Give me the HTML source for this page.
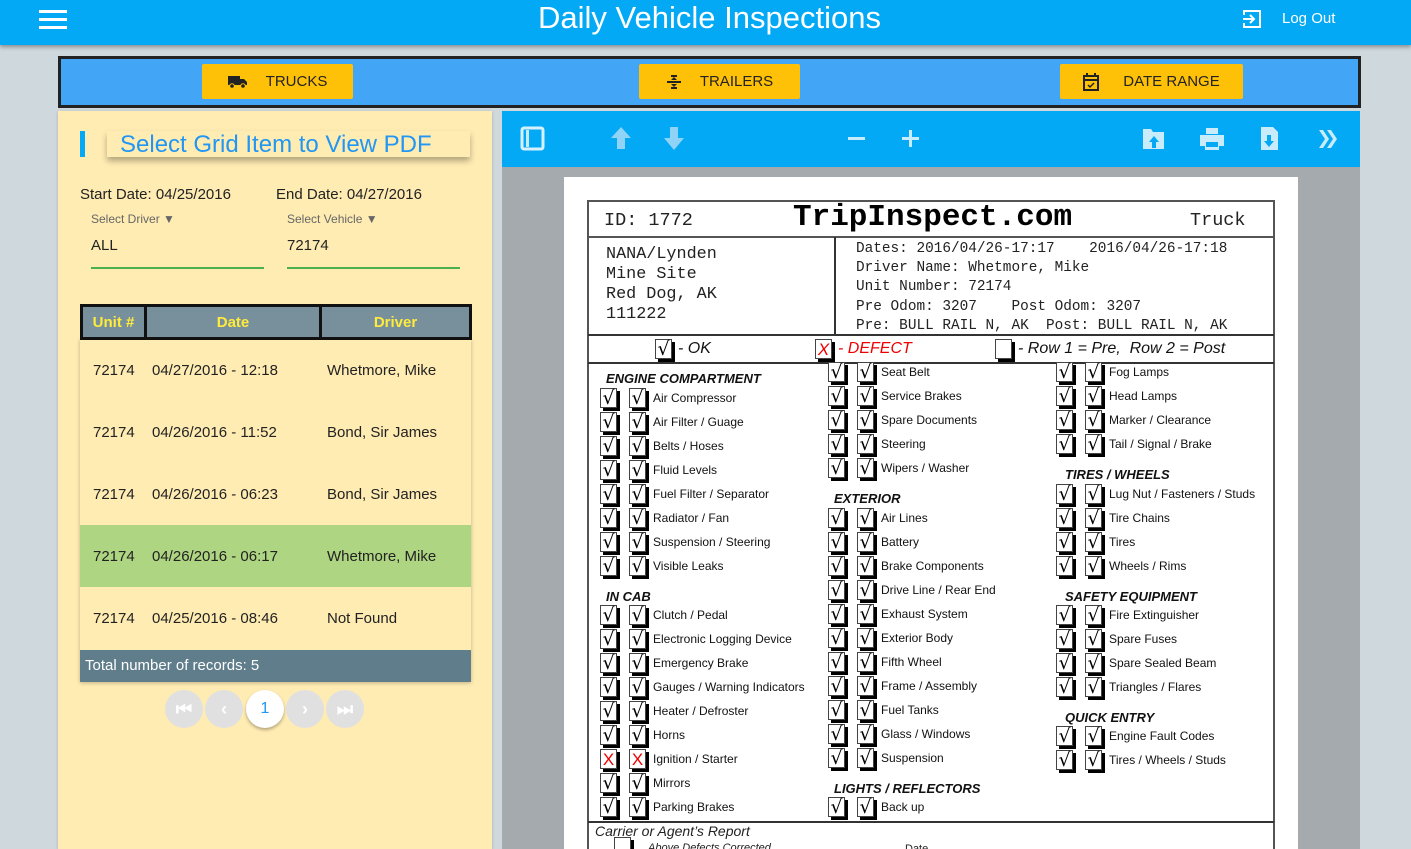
<!DOCTYPE html>
<html><head><meta charset="utf-8"><style>
*{box-sizing:border-box;margin:0;padding:0}
html{width:1411px;height:849px;overflow:hidden}
body{width:1411px;height:849px;overflow:hidden;background:#cfd8dc;font-family:"Liberation Sans",sans-serif;position:relative}
.a{position:absolute}
.hdr{left:0;top:0;width:1411px;height:45px;background:#03a9f4;box-shadow:0 2px 4px rgba(0,0,0,.35)}
.btn{position:absolute;top:64px;height:35px;background:#ffc107;border-radius:2px;font-size:15px;color:#222;display:flex;align-items:center;justify-content:center;gap:18px}
.row{position:absolute;left:80px;width:391px;height:62px;font-size:15px;color:#222}
.row span{position:absolute;top:23px}
.pg{position:absolute;top:690px;width:38px;height:38px;border-radius:50%;background:#e0e0e0;display:flex;align-items:center;justify-content:center;color:#fff;font-size:18px;font-weight:bold}
.mono{font-family:"Liberation Mono",monospace;color:#222}
.r{position:absolute;height:20px;display:flex;align-items:center;font-size:12px;color:#111}
.r b{display:inline-block;width:17px;height:20px;border:1px solid #444;box-shadow:3px 3px 0 #000;background:#fff;margin-right:12px;font-weight:normal;font-family:"DejaVu Sans",sans-serif;font-size:19px;line-height:19px;text-align:center;color:#000}
.r b+b{margin-right:7px}
.r b.x{color:#e00;font-family:"Liberation Sans",sans-serif;font-size:17px;transform:none}
.h{position:absolute;font-size:13px;font-style:italic;font-weight:bold;color:#111}
</style></head><body>
<div class="a hdr">
 <div class="a" style="left:39px;top:10px;width:28px;height:3px;background:#fff;box-shadow:0 8px 0 #fff,0 16px 0 #fff"></div>
 <div class="a" style="left:0;width:1419px;top:0;text-align:center;color:#fff;font-size:31px;line-height:36px">Daily Vehicle Inspections</div>
 <svg class="a" style="left:1242px;top:9px" width="20" height="20" viewBox="0 0 20 20" fill="none" stroke="#fff" stroke-width="2"><path d="M2 6V2h16v16H2v-4"/><path d="M1 10h11M8 6l4 4-4 4"/></svg>
 <div class="a" style="left:1282px;top:10px;color:#fff;font-size:15px">Log Out</div>
</div>
<div class="a" style="left:58px;top:56px;width:1303px;height:52px;background:#42a5f5;border:3px solid #222"></div>
<div class="btn" style="left:202px;width:151px"><svg width="20" height="14" viewBox="0 0 20 14"><path d="M0 1h12v9H0zM12 4h4l3 3v3h-7z" fill="#222"/><circle cx="4" cy="11" r="2.3" fill="#222" stroke="#ffc107"/><circle cx="15" cy="11" r="2.3" fill="#222" stroke="#ffc107"/></svg><span>TRUCKS</span></div>
<div class="btn" style="left:639px;width:161px"><svg width="16" height="14" viewBox="0 0 16 14" fill="#222"><rect x="1" y="6" width="14" height="2"/><path d="M5 0h6v2H5zM8 2l-3 3h6zM8 12l-3-3h6zM5 12h6v2H5z"/></svg><span>TRAILERS</span></div>
<div class="btn" style="left:1060px;width:183px;gap:24px"><svg width="16" height="18" viewBox="0 0 16 18" fill="none" stroke="#222" stroke-width="2"><rect x="1" y="3" width="14" height="14"/><path d="M1 7h14M4 0v4M12 0v4"/><path d="M5 12l2 2 4-4" stroke-width="1.5"/></svg><span>DATE RANGE</span></div>

<div class="a" style="left:58px;top:111px;width:434px;height:738px;background:#ffecb3;box-shadow:0 1px 3px rgba(0,0,0,.2)"></div>
<div class="a" style="left:80px;top:131px;width:5px;height:26px;background:#03a9f4"></div>
<div class="a" style="left:107px;top:131px;width:363px;height:26px;background:#ffecb3;box-shadow:0 4px 6px rgba(0,0,0,.3);color:#2196f3;font-size:24px;line-height:27px;padding-left:13px">Select Grid Item to View PDF</div>
<div class="a" style="left:80px;top:186px;font-size:15px;color:#222">Start Date: 04/25/2016</div>
<div class="a" style="left:276px;top:186px;font-size:15px;color:#222">End Date: 04/27/2016</div>
<div class="a" style="left:91px;top:212px;font-size:12px;color:#666">Select Driver ▼</div>
<div class="a" style="left:287px;top:212px;font-size:12px;color:#666">Select Vehicle ▼</div>
<div class="a" style="left:91px;top:237px;font-size:15px;color:#222">ALL</div>
<div class="a" style="left:287px;top:237px;font-size:15px;color:#222">72174</div>
<div class="a" style="left:91px;top:267px;width:173px;height:2px;background:#4caf50"></div>
<div class="a" style="left:287px;top:267px;width:173px;height:2px;background:#4caf50"></div>
<div class="a" style="left:80px;top:339px;width:391px;height:343px;box-shadow:0 1px 4px rgba(0,0,0,.25)"></div>
<div class="a" style="left:80px;top:304px;width:392px;height:36px;background:#78909c;border:3px solid #111;display:flex;color:#ffeb3b;font-weight:bold;font-size:15px;line-height:31px">
 <div style="width:64px;text-align:center;border-right:3px solid #111">Unit #</div>
 <div style="width:175px;text-align:center;border-right:3px solid #111">Date</div>
 <div style="flex:1;text-align:center">Driver</div>
</div>
<div class="row" style="top:339px"><span style="left:13px">72174</span><span style="left:72px">04/27/2016 - 12:18</span><span style="left:247px">Whetmore, Mike</span></div>
<div class="row" style="top:401px"><span style="left:13px">72174</span><span style="left:72px">04/26/2016 - 11:52</span><span style="left:247px">Bond, Sir James</span></div>
<div class="row" style="top:463px"><span style="left:13px">72174</span><span style="left:72px">04/26/2016 - 06:23</span><span style="left:247px">Bond, Sir James</span></div>
<div class="row" style="top:525px;background:#aed581"><span style="left:13px">72174</span><span style="left:72px">04/26/2016 - 06:17</span><span style="left:247px">Whetmore, Mike</span></div>
<div class="row" style="top:587px"><span style="left:13px">72174</span><span style="left:72px">04/25/2016 - 08:46</span><span style="left:247px">Not Found</span></div>
<div class="a" style="left:80px;top:650px;width:391px;height:32px;background:#607d8b;color:#fff;font-size:15px;line-height:32px;padding-left:5px">Total number of records: 5</div>
<div class="pg" style="left:165px">⏮</div>
<div class="pg" style="left:205px">‹</div>
<div class="pg" style="left:246px;background:#fff;color:#2196f3;font-weight:normal;font-size:16px;box-shadow:0 2px 3px rgba(0,0,0,.3)">1</div>
<div class="pg" style="left:286px">›</div>
<div class="pg" style="left:326px">⏭</div>

<div class="a" style="left:502px;top:111px;width:858px;height:738px;background:#a4aaae"></div>
<div class="a" style="left:502px;top:111px;width:858px;height:56px;background:#03a9f4"></div>
<svg class="a" style="left:502px;top:111px" width="858" height="56" fill="#c8ecfc">
 <rect x="20" y="17" width="21" height="21" rx="2" fill="none" stroke="#d6f1fd" stroke-width="3"/><rect x="24" y="19" width="3" height="17"/>
 <path d="M119 16l-10 11h6v11h8V27h6z" fill="#8fd3f6"/><path d="M168 16h8v11h6l-10 12-10-12h6z" fill="#8fd3f6"/>
 <rect x="346" y="26" width="17" height="3"/><rect x="400" y="26" width="17" height="3"/><rect x="407" y="19" width="3" height="17"/>
 <path d="M641 18h8l2 3h11v17h-21z"/><path d="M652 25l-5 6h3v6h4v-6h3z" fill="#03a9f4"/>
 <path d="M704 17h12v6h-12z M698 24h24v11h-5v4h-14v-4h-5z"/><rect x="704" y="31" width="12" height="5" fill="#03a9f4"/>
 <path d="M759 16h12l5 5v18h-17z"/><path d="M765 24h4v6h3l-5 6-5-6h3z" fill="#03a9f4"/>
 <path d="M817 19l6 9-6 9h4l6-9-6-9zM825 19l6 9-6 9h4l6-9-6-9z"/>
</svg>
<div class="a" style="left:564px;top:177px;width:734px;height:672px;background:#fff"></div>
<div class="a" style="left:587px;top:200px;width:688px;height:660px;border:2px solid #555"></div>
<div class="a" style="left:588px;top:236px;width:686px;height:2px;background:#555"></div>
<div class="a" style="left:834px;top:237px;width:2px;height:98px;background:#333"></div>
<div class="a" style="left:588px;top:334px;width:686px;height:2px;background:#333"></div>
<div class="a" style="left:588px;top:362px;width:686px;height:2px;background:#333"></div>
<div class="a" style="left:588px;top:821px;width:686px;height:2px;background:#333"></div>
<div class="a mono" style="left:604px;top:210px;font-size:18.5px">ID: 1772</div>
<div class="a mono" style="left:793px;top:200px;font-size:31px;font-weight:bold;color:#000">TripInspect.com</div>
<div class="a mono" style="left:1190px;top:210px;font-size:18.5px">Truck</div>
<div class="a mono" style="left:606px;top:245px;font-size:16.8px;line-height:20px">NANA/Lynden<br>Mine Site<br>Red Dog, AK<br>111222</div>
<div class="a mono" style="left:856px;top:240px;font-size:14.4px;line-height:19.2px;white-space:pre">Dates: 2016/04/26-17:17    2016/04/26-17:18
Driver Name: Whetmore, Mike
Unit Number: 72174
Pre Odom: 3207    Post Odom: 3207
Pre: BULL RAIL N, AK  Post: BULL RAIL N, AK</div>
<div class="r" style="left:655px;top:339px;font-size:16px;font-style:italic"><b style="margin-right:6px">√</b>- OK</div>
<div class="r" style="left:815px;top:339px;font-size:16px;font-style:italic;color:#e00"><b class="x" style="margin-right:6px">X</b>- DEFECT</div>
<div class="r" style="left:995px;top:339px;font-size:16px;font-style:italic"><b style="margin-right:6px"></b>- Row 1 = Pre,&nbsp; Row 2 = Post</div>

<div class="h" style="left:606px;top:371px">ENGINE COMPARTMENT</div>
<div class="r" style="left:600px;top:388px"><b>√</b><b>√</b>Air Compressor</div>
<div class="r" style="left:600px;top:412px"><b>√</b><b>√</b>Air Filter / Guage</div>
<div class="r" style="left:600px;top:436px"><b>√</b><b>√</b>Belts / Hoses</div>
<div class="r" style="left:600px;top:460px"><b>√</b><b>√</b>Fluid Levels</div>
<div class="r" style="left:600px;top:484px"><b>√</b><b>√</b>Fuel Filter / Separator</div>
<div class="r" style="left:600px;top:508px"><b>√</b><b>√</b>Radiator / Fan</div>
<div class="r" style="left:600px;top:532px"><b>√</b><b>√</b>Suspension / Steering</div>
<div class="r" style="left:600px;top:556px"><b>√</b><b>√</b>Visible Leaks</div>
<div class="h" style="left:606px;top:589px">IN CAB</div>
<div class="r" style="left:600px;top:605px"><b>√</b><b>√</b>Clutch / Pedal</div>
<div class="r" style="left:600px;top:629px"><b>√</b><b>√</b>Electronic Logging Device</div>
<div class="r" style="left:600px;top:653px"><b>√</b><b>√</b>Emergency Brake</div>
<div class="r" style="left:600px;top:677px"><b>√</b><b>√</b>Gauges / Warning Indicators</div>
<div class="r" style="left:600px;top:701px"><b>√</b><b>√</b>Heater / Defroster</div>
<div class="r" style="left:600px;top:725px"><b>√</b><b>√</b>Horns</div>
<div class="r" style="left:600px;top:749px"><b class="x">X</b><b class="x">X</b>Ignition / Starter</div>
<div class="r" style="left:600px;top:773px"><b>√</b><b>√</b>Mirrors</div>
<div class="r" style="left:600px;top:797px"><b>√</b><b>√</b>Parking Brakes</div>

<div class="r" style="left:828px;top:362px"><b>√</b><b>√</b>Seat Belt</div>
<div class="r" style="left:828px;top:386px"><b>√</b><b>√</b>Service Brakes</div>
<div class="r" style="left:828px;top:410px"><b>√</b><b>√</b>Spare Documents</div>
<div class="r" style="left:828px;top:434px"><b>√</b><b>√</b>Steering</div>
<div class="r" style="left:828px;top:458px"><b>√</b><b>√</b>Wipers / Washer</div>
<div class="h" style="left:834px;top:491px">EXTERIOR</div>
<div class="r" style="left:828px;top:508px"><b>√</b><b>√</b>Air Lines</div>
<div class="r" style="left:828px;top:532px"><b>√</b><b>√</b>Battery</div>
<div class="r" style="left:828px;top:556px"><b>√</b><b>√</b>Brake Components</div>
<div class="r" style="left:828px;top:580px"><b>√</b><b>√</b>Drive Line / Rear End</div>
<div class="r" style="left:828px;top:604px"><b>√</b><b>√</b>Exhaust System</div>
<div class="r" style="left:828px;top:628px"><b>√</b><b>√</b>Exterior Body</div>
<div class="r" style="left:828px;top:652px"><b>√</b><b>√</b>Fifth Wheel</div>
<div class="r" style="left:828px;top:676px"><b>√</b><b>√</b>Frame / Assembly</div>
<div class="r" style="left:828px;top:700px"><b>√</b><b>√</b>Fuel Tanks</div>
<div class="r" style="left:828px;top:724px"><b>√</b><b>√</b>Glass / Windows</div>
<div class="r" style="left:828px;top:748px"><b>√</b><b>√</b>Suspension</div>
<div class="h" style="left:834px;top:781px">LIGHTS / REFLECTORS</div>
<div class="r" style="left:828px;top:797px"><b>√</b><b>√</b>Back up</div>

<div class="r" style="left:1056px;top:362px"><b>√</b><b>√</b>Fog Lamps</div>
<div class="r" style="left:1056px;top:386px"><b>√</b><b>√</b>Head Lamps</div>
<div class="r" style="left:1056px;top:410px"><b>√</b><b>√</b>Marker / Clearance</div>
<div class="r" style="left:1056px;top:434px"><b>√</b><b>√</b>Tail / Signal / Brake</div>
<div class="h" style="left:1065px;top:467px">TIRES / WHEELS</div>
<div class="r" style="left:1056px;top:484px"><b>√</b><b>√</b>Lug Nut / Fasteners / Studs</div>
<div class="r" style="left:1056px;top:508px"><b>√</b><b>√</b>Tire Chains</div>
<div class="r" style="left:1056px;top:532px"><b>√</b><b>√</b>Tires</div>
<div class="r" style="left:1056px;top:556px"><b>√</b><b>√</b>Wheels / Rims</div>
<div class="h" style="left:1065px;top:589px">SAFETY EQUIPMENT</div>
<div class="r" style="left:1056px;top:605px"><b>√</b><b>√</b>Fire Extinguisher</div>
<div class="r" style="left:1056px;top:629px"><b>√</b><b>√</b>Spare Fuses</div>
<div class="r" style="left:1056px;top:653px"><b>√</b><b>√</b>Spare Sealed Beam</div>
<div class="r" style="left:1056px;top:677px"><b>√</b><b>√</b>Triangles / Flares</div>
<div class="h" style="left:1065px;top:710px">QUICK ENTRY</div>
<div class="r" style="left:1056px;top:726px"><b>√</b><b>√</b>Engine Fault Codes</div>
<div class="r" style="left:1056px;top:750px"><b>√</b><b>√</b>Tires / Wheels / Studs</div>

<div class="a" style="left:595px;top:823px;font-size:14px;font-style:italic;color:#222">Carrier or Agent’s Report</div>
<div class="a" style="left:614px;top:837px;width:17px;height:19px;border:1px solid #444;box-shadow:3px 3px 0 #000;background:#fff"></div>
<div class="a" style="left:648px;top:842px;font-size:11px;font-style:italic;color:#222">Above Defects Corrected</div>
<div class="a" style="left:905px;top:843px;font-size:11px;color:#222">Date</div>
</body></html>
